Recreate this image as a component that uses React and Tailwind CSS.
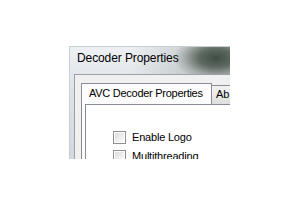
import React from 'react';

function Checkbox({ label }) {
  return (
    <div className="flex items-center h-[19px]">
      <div className="w-[13px] h-[13px] border border-[#8e8f8f] bg-white p-px">
        <div className="w-full h-full bg-[linear-gradient(135deg,#dcdcdc_0%,#f0f0f0_60%,#fbfbfb_100%)]" />
      </div>
      <span className="ml-[6px] text-[11px] leading-[13px] tracking-[-0.2px] text-black whitespace-nowrap">{label}</span>
    </div>
  );
}

export default function App() {
  return (
    <div className="w-[300px] h-[206px] bg-white overflow-hidden" style={{ fontFamily: '"Liberation Sans", Arial, sans-serif' }}>
      <div className="ml-[69px] mt-[46px] w-[161px] h-[113px] overflow-hidden relative bg-[linear-gradient(180deg,#eef1f4_0%,#dde2e7_40%,#d3d9df_100%)] border-l border-t border-[#c9ced4]">
        {/* smoky glass blob */}
        <div className="absolute left-[60px] top-0 w-[101px] h-[27px] bg-[linear-gradient(90deg,rgba(200,205,208,0)_0%,rgba(140,148,146,0.6)_100%)]" />
        <div className="absolute left-[104px] top-[-12px] w-[84px] h-[46px] rounded-full bg-[radial-gradient(closest-side,#3f4c44_0%,#5d6961_40%,rgba(150,158,154,0.7)_75%,rgba(200,205,208,0)_100%)]" />

        <div className="relative h-[27px] pl-[7px] pt-[3px] text-[12px] leading-[16px] tracking-[-0.1px] text-black whitespace-nowrap">
          Decoder Properties
        </div>

        <div className="relative ml-[4px] border-l border-t border-[#9aa1a8] bg-[#f0f0f0] h-[90px]">
          <div className="pt-[8px] pl-[6px] flex items-end">
            <div className="relative z-10 shrink-0 w-[131px] h-[21px] -mb-px border border-b-0 border-[#898c95] bg-[#fcfcfc] pl-[7px] pt-[3px] text-[11px] leading-[13px] tracking-[-0.27px] text-black whitespace-nowrap">
              AVC Decoder Properties
            </div>
            <div className="shrink-0 w-[30px] h-[19px] -mb-px ml-[-1px] border border-b-0 border-[#898c95] bg-[linear-gradient(180deg,#f2f2f2_0%,#ebebeb_50%,#dddddd_100%)] pl-[4px] pt-[2px] text-[11px] leading-[13px] text-black">
              Ab
            </div>
          </div>
          <div className="ml-[6px] h-[60px] border-l border-t border-[#898c95] bg-[#fcfcfc] pl-[3px]">
            <div className="h-full border-l border-t border-[#898c95] bg-white pl-[27px] pt-[23px]">
              <Checkbox label="Enable Logo" />
              <Checkbox label="Multithreading" />
            </div>
          </div>
        </div>
      </div>
    </div>
  );
}
